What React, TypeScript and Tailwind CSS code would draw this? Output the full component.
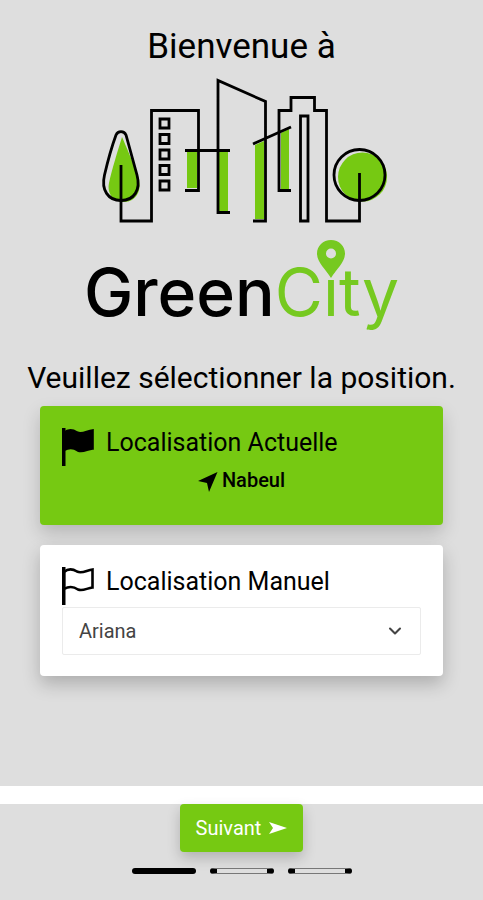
import { useState } from "react";
import { ChevronDown } from "lucide-react";

const cities = ["Ariana", "Nabeul", "Tunis", "Sousse", "Sfax", "Bizerte"];

function CityDrawing() {
  return (
    <svg viewBox="97 76 296 148" className="w-[296px] h-[148px]" fill="none" aria-hidden="true">
      <g fill="#76c912">
        <path d="M122 137 C126 146 132 160 138 176 C143 190 136 202 124 202 C112 202 107 192 109 183 C112 169 118 150 122 137Z" />
        <path d="M187 152h10v36h-10zM219 152h9v59h-9zM255 145l9-4v78h-9zM281 133l8-4v60h-8z" />
        <circle cx="362.500" cy="177" r="24.500" />
      </g>
      <g stroke="#000" strokeWidth="2.8">
        <path d="M116 135 C118 130.500 124 130.500 126 135 C129 146 133 160 137 175 C141 190 134 200.500 121 200.500 C108 200.500 101 190 104.500 175 C108 160 112 146 116 135Z" />
        <path d="M121 165V221H151.500V110.500H198.500V190.500H185" />
        <path d="M185 150.500H230M230 212.500H218V80.500L265.500 101.500V221H253M253 144L291 127" />
        <path d="M291 190.500H279V110.500H291V97.500H314.500V110.500H326.500V221H359.500V173" />
        <path d="M300.500 116H308V221H300.500Z" />
        <circle cx="359.500" cy="175" r="25.500" />
        <path d="M160 119h9v9h-9zM160 134.500h9v9h-9zM160 150h9v9h-9zM160 165.500h9v9h-9zM160 181h9v9h-9z" />
      </g>
    </svg>
  );
}

function Flag({ filled }: { filled?: boolean }) {
  return (
    <svg viewBox="0 0 32 38" className="w-8 h-[38px] shrink-0" aria-hidden="true">
      <path d="M0 0h3.500v38H0z" />
      <path
        d="M2 5 C6 1.500 11 2 15 4.500 C20 7 25 3 30.500 2.500 V20.500 C25 21 21 24.500 16 22.500 C11 19 7 19 2 22Z"
        fill={filled ? "#000" : "none"}
        stroke="#000"
        strokeWidth="2.6"
      />
    </svg>
  );
}

export default function App() {
  const [city, setCity] = useState("Ariana");

  return (
    <div className="min-h-screen flex flex-col bg-white font-[Roboto,sans-serif] text-black">
      <main className="flex-1 flex flex-col items-center bg-[#dedede] pt-6 pb-10">
        <h1 className="text-[35px] leading-[46px] h-[52px]">Bienvenue à</h1>
        <div className="pl-1.5">
          <CityDrawing />
        </div>

        <div className="mt-8 flex items-center font-[Inter,sans-serif] text-[66px] leading-[72px] text-black">
          <span className="font-medium">Green</span>
          <span className="text-[#76c920]">C</span>
          <span className="relative text-[#76c920]">
            i
            <svg viewBox="0 0 28 38" className="absolute -top-4 left-1/2 -translate-x-1/2 w-7 h-[38px] max-w-none" aria-hidden="true">
              <path
                fill="#76c920"
                fillRule="evenodd"
                d="M14 0C6 0 0 6 0 13.500c0 9 9 16 14 24.500 5-8.500 14-15.500 14-24.500C28 6 22 0 14 0Zm0 8.500a5 5 0 1 1 0 10 5 5 0 0 1 0-10Z"
              />
            </svg>
          </span>
          <span className="text-[#76c920]">ty</span>
        </div>

        <h2 className="text-[30px] leading-9 mt-8 whitespace-nowrap">Veuillez sélectionner la position.</h2>

        <div className="w-full px-10 mt-[10px] flex flex-col gap-5">
          <button type="button" className="w-full h-[119px] rounded bg-[#76c912] px-[22px] pt-[22px] flex flex-col text-left shadow-[0_8px_18px_rgba(0,0,0,0.18)]">
            <span className="flex gap-3 text-[25px] leading-[30px] h-[38px]">
              <Flag filled />
              Localisation Actuelle
            </span>
            <span className="self-center flex items-center gap-1 text-[20px] leading-7 font-medium">
              <svg viewBox="0 0 20 20" className="w-5 h-5 mt-1" aria-hidden="true">
                <path d="M19.500 0 L11 20 L9 11 L0 9Z" />
              </svg>
              Nabeul
            </span>
          </button>

          <section className="rounded bg-white px-[22px] pt-[22px] pb-[21px] shadow-[0_8px_18px_rgba(0,0,0,0.22)]">
            <label htmlFor="city" className="flex gap-3 text-[25px] leading-[30px]">
              <Flag />
              Localisation Manuel
            </label>
            <div className="relative mt-[2px]">
              <select
                id="city"
                value={city}
                onChange={(e) => setCity(e.target.value)}
                className="block w-full h-12 appearance-none rounded-xs border border-[#ebebeb] bg-white px-4 text-[20px] text-[#444444]"
              >
                {cities.map((name) => (
                  <option key={name}>{name}</option>
                ))}
              </select>
              <ChevronDown className="absolute right-4 top-3 w-5 h-6 text-[#444444] pointer-events-none" strokeWidth={2.5} />
            </div>
          </section>
        </div>
      </main>

      <footer className="mt-[18px] h-24 bg-[#dedede] flex flex-col items-center">
        <button type="button" className="h-12 px-4 rounded bg-[#76c912] text-white text-[20px] flex items-center gap-2 shadow-[0_6px_14px_rgba(0,0,0,0.2)]">
          Suivant
          <svg viewBox="0 0 18 12" className="w-[18px] h-3" fill="currentColor" aria-hidden="true">
            <path d="M0 0 L18 6 L0 12 L4 6Z" />
          </svg>
        </button>
        <div className="mt-4 flex gap-[14px]">
          <span className="w-16 h-[6px] rounded-full bg-black" />
          <span className="w-16 h-[6px] rounded-full border border-x-[7px] border-y-[#777777] border-x-black bg-[#dedede]" />
          <span className="w-16 h-[6px] rounded-full border border-x-[7px] border-y-[#777777] border-x-black bg-[#dedede]" />
        </div>
      </footer>
    </div>
  );
}
